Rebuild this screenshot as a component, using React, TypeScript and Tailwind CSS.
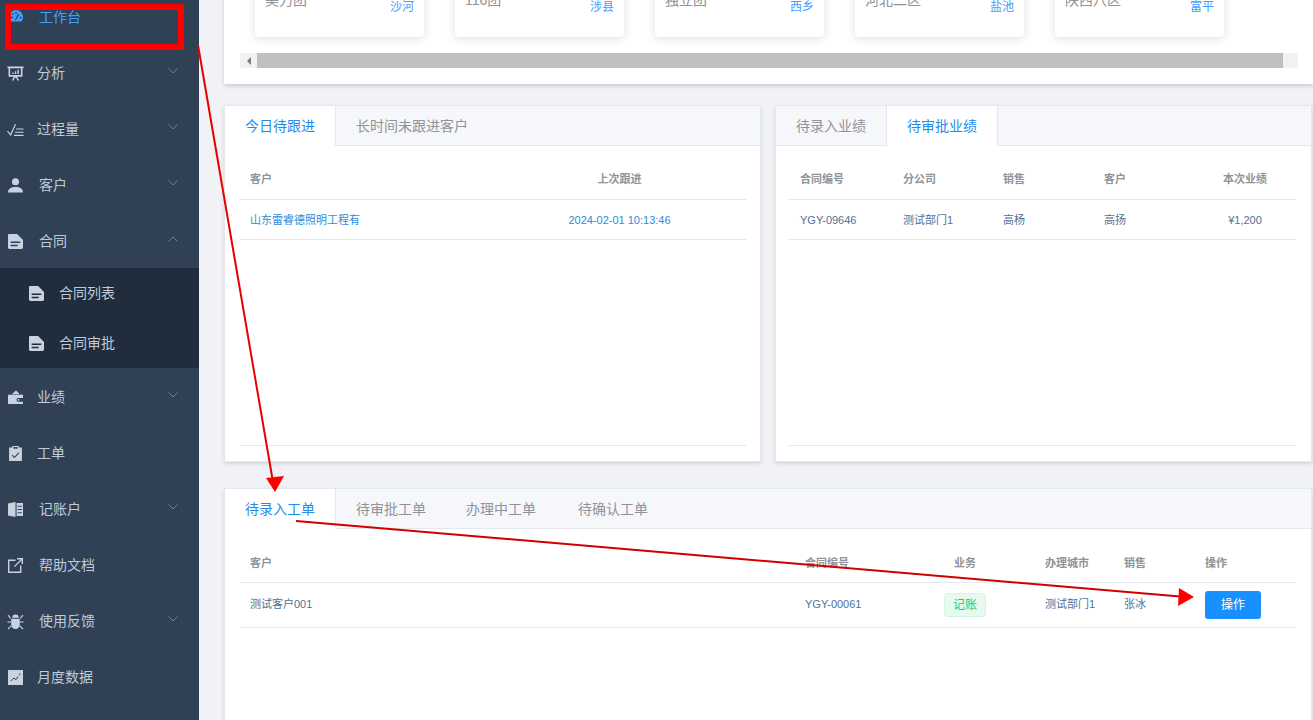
import type { ReactNode } from "react";

const FONT = "font-['Liberation_Sans','Noto_Sans_CJK_SC',sans-serif]";

const Svg = ({ children, className = "" }: { children: ReactNode; className?: string }) => (
  <svg viewBox="1 1 14 14" className={`w-[15px] h-[15px] shrink-0 overflow-visible text-[#c8d3df] ${className}`} fill="currentColor">
    {children}
  </svg>
);

const DashIcon = () => (
  <svg viewBox="1 1 14 14" className="w-[14px] h-[14px] shrink-0 ml-[1px] -mt-[2px] text-[#409eff]" fill="currentColor">
    <path d="M8 2a7 7 0 0 1 7 7c0 1.800-.6 3.300-1.600 4.500H2.600A6.900 6.900 0 0 1 1 9a7 7 0 0 1 7-7z" />
    <path d="M4 5.500l1.500 1M8 4v2M7.500 12l3-6M3 9.500h2M11.500 9.500h2" stroke="#304156" strokeWidth="1.300" fill="none" />
  </svg>
);

const BoardIcon = () => (
  <Svg>
    <path d="M0.500 1.500h15v1.500h-1v8h-5l2 3.500h-1.500L8.500 12h-1l-1.500 2.500H4.500l2-3.500h-5V3h-1zM3 3v6.500h10V3z" />
    <path d="M5 7h1.300v1.500H5zM7.400 5.800h1.300v2.700H7.400zM9.800 4.500h1.300v4H9.800z" />
  </Svg>
);

const CheckListIcon = () => (
  <Svg>
    <path d="M0.500 9.500l3 3.500L8 3" fill="none" stroke="currentColor" strokeWidth="1.100" />
    <path d="M8.500 7h7v1.100h-7zM7.500 10h8v1.100h-8zM6.500 13h9v1.100h-9z" />
  </Svg>
);

const UserIcon = () => (
  <Svg>
    <circle cx="8" cy="4.500" r="3.300" />
    <path d="M1 14.500c0-3.500 2.500-5.200 7-5.200s7 1.700 7 5.200z" />
  </Svg>
);

const DocIcon = () => (
  <Svg>
    <path d="M2 1h7.500L15 6.500v7.200a1.300 1.300 0 0 1-1.300 1.300H2.300A1.300 1.300 0 0 1 1 13.700V2a1 1 0 0 1 1-1z" />
    <path d="M3.500 8h9v1.400h-9zM3.500 11h6.500v1.400H3.500z" fill="#304156" />
  </Svg>
);

const SubDocIcon = () => (
  <Svg>
    <path d="M2 1h7.500L15 6.500v7.200a1.300 1.300 0 0 1-1.300 1.300H2.300A1.300 1.300 0 0 1 1 13.700V2a1 1 0 0 1 1-1z" />
    <path d="M3.500 8h9v1.400h-9zM3.500 11h6.500v1.400H3.500z" fill="#1f2d3d" />
  </Svg>
);

const WalletIcon = () => (
  <Svg>
    <path d="M8.500 1.500L12 5H4.500z" />
    <path d="M1 5.500h14v3H10a2 2 0 0 0 0 3.500h5v2H1z" />
    <circle cx="10.800" cy="10.200" r="0.900" />
  </Svg>
);

const ClipboardIcon = () => (
  <Svg>
    <path d="M5 1h6v1.500h3V15H2V2.500h3z" />
    <path d="M4.800 9.500l2.200 2.300 4.200-4.600" fill="none" stroke="#304156" strokeWidth="1" />
    <path d="M6 2h4v1.500H6z" fill="#304156" />
  </Svg>
);

const BookIcon = () => (
  <Svg>
    <path d="M1 2.500L8 1v14l-7-1.500z" />
    <path d="M9 2h6v12H9zM10 4.500v1h4v-1zM10 7.500v1h4v-1zM10 10.500v1h4v-1z" fillRule="evenodd" />
  </Svg>
);

const ExternalIcon = () => (
  <Svg>
    <path d="M1 2.500h7v1.300H2.300v9.900h9.900V8h1.300v7H1z" />
    <path d="M6.500 8.600L12.800 2.300H9.500V1H15v5.500h-1.300V3.200L7.400 9.500z" />
  </Svg>
);

const BugIcon = () => (
  <Svg>
    <path d="M5 4.500a3 3 0 0 1 6 0z" />
    <path d="M4 5.500h8v5.500a4 4 0 0 1-8 0z" />
    <path d="M1 2l2.500 3M15 2l-2.500 3M0.500 8.500H4M15.500 8.500H12M1 15l3-3M15 15l-3-3" stroke="currentColor" strokeWidth="1" fill="none" />
  </Svg>
);

const ChartIcon = () => (
  <Svg>
    <path d="M1 1h14v14H1z" />
    <path d="M3.500 11.500l3-3 2 1.500 2-3" fill="none" stroke="#304156" strokeWidth="0.900" />
    <circle cx="12" cy="5" r="0.700" fill="#304156" />
  </Svg>
);

const Chevron = ({ up = false }: { up?: boolean }) => (
  <svg viewBox="0 0 10 6" className="absolute right-[21px] top-[23px] w-[10px] h-[6px] text-[#6f7f92]" fill="none" stroke="currentColor">
    <path d={up ? "M0.500 5.500L5 1l4.500 4.500" : "M0.500 0.500L5 5l4.500-4.500"} />
  </svg>
);

const menuTop: { icon: ReactNode; label: string; left: string; arrow?: boolean; up?: boolean; active?: boolean }[] = [
  { icon: <DashIcon />, label: "工作台", left: "ml-[16px]", active: true },
  { icon: <BoardIcon />, label: "分析", left: "ml-[14px]", arrow: true },
  { icon: <CheckListIcon />, label: "过程量", left: "ml-[14px]", arrow: true },
  { icon: <UserIcon />, label: "客户", left: "ml-[16px]", arrow: true },
  { icon: <DocIcon />, label: "合同", left: "ml-[16px]", arrow: true, up: true },
];

const menuBottom: { icon: ReactNode; label: string; left: string; arrow?: boolean }[] = [
  { icon: <WalletIcon />, label: "业绩", left: "ml-[14px]", arrow: true },
  { icon: <ClipboardIcon />, label: "工单", left: "ml-[14px]" },
  { icon: <BookIcon />, label: "记账户", left: "ml-[16px]", arrow: true },
  { icon: <ExternalIcon />, label: "帮助文档", left: "ml-[16px]" },
  { icon: <BugIcon />, label: "使用反馈", left: "ml-[16px]", arrow: true },
  { icon: <ChartIcon />, label: "月度数据", left: "ml-[14px]" },
];

function MenuRow({ icon, label, left, arrow, up, active }: { icon: ReactNode; label: string; left: string; arrow?: boolean; up?: boolean; active?: boolean }) {
  return (
    <div className={`relative h-[56px] flex items-center pl-[8px] text-[14px] ${active ? "text-[#409eff]" : "text-[#bfcbd9]"}`}>
      {icon}
      <span className={left}>{label}</span>
      {arrow && <Chevron up={up} />}
    </div>
  );
}

function Sidebar() {
  return (
    <aside className="w-[199px] shrink-0 bg-[#304156] -mt-[11px] h-[760px]">
      {menuTop.map((m) => (
        <MenuRow key={m.label} {...m} />
      ))}
      <div className="relative -mt-[1px] mb-[1px] bg-[#1f2d3d] h-[100px] text-[14px] text-[#bfcbd9]">
        {["合同列表", "合同审批"].map((t) => (
          <div key={t} className="h-[50px] flex items-center pl-[29px]">
            <SubDocIcon />
            <span className="ml-[15px]">{t}</span>
          </div>
        ))}
      </div>
      {menuBottom.map((m) => (
        <MenuRow key={m.label} {...m} />
      ))}
    </aside>
  );
}

const cards = [
  { title: "美力团", place: "沙河" },
  { title: "116团", place: "涉县" },
  { title: "独立团", place: "西乡" },
  { title: "河北二区", place: "盐池" },
  { title: "陕西八区", place: "富平" },
];

function TopPanel() {
  return (
    <section className="bg-white pt-[10px] pb-[16px] shadow-[0_2px_4px_rgba(0,0,0,0.16)] mr-[-1px]">
      <div className="flex gap-[31px] pl-[31px]">
        {cards.map((c) => (
          <div key={c.title} className="w-[169px] h-[67px] rounded-[4px] bg-white shadow-[0_2px_10px_rgba(0,0,0,0.12)] pt-[23px] px-[10px] flex justify-between">
            <span className="text-[14px] leading-[14px] text-[#909399]">{c.title}</span>
            <span className="text-[12px] leading-[12px] mt-[8px] text-[#409eff]">{c.place}</span>
          </div>
        ))}
      </div>
      <div className="flex h-[15px] mt-[16px] ml-[16px] mr-[15px] bg-[#f1f1f1]">
        <div className="w-[17px] flex items-center justify-center">
          <div className="w-0 h-0 border-y-[4px] border-y-transparent border-r-[4px] border-r-[#7a7a7a]" />
        </div>
        <div className="w-[1026px] bg-[#bfbfbf]" />
      </div>
    </section>
  );
}

function Tabs({ items, active, className = "" }: { items: string[]; active: number; className?: string }) {
  return (
    <div className={`flex h-[40px] bg-[#f5f7fa] border-b border-[#e4e7ed] text-[14px] ${className}`}>
      {items.map((t, i) => (
        <div
          key={t}
          className={`px-[20px] leading-[40px] ${
            i === active
              ? `bg-white h-[40px] text-[#1f8ceb] border-r border-[#e4e7ed] ${i > 0 ? "border-l" : ""}`
              : "h-[39px] text-[#909399]"
          }`}
        >
          {t}
        </div>
      ))}
    </div>
  );
}

const Panel = ({ children, className = "" }: { children: ReactNode; className?: string }) => (
  <section className={`bg-white border border-[#e4e7ed] shadow-[0_2px_4px_rgba(0,0,0,0.12)] ${className}`}>{children}</section>
);

function LeftTable() {
  return (
    <div className="ml-[15px] mr-[14px] h-[301px] border-b border-[#e4e7ed]">
      <table className="w-full table-fixed text-[11px]">
        <thead>
          <tr className="h-[54px] border-b border-[#e4e7ed] text-[#909399]">
            <th className="text-left font-bold pl-[10px] pt-[15px]">客户</th>
            <th className="font-bold pt-[15px]">上次跟进</th>
          </tr>
        </thead>
        <tbody>
          <tr className="h-[40px] border-b border-[#e4e7ed] text-[#2d8cdc]">
            <td className="pl-[10px] pt-[2px]">山东雷睿德照明工程有</td>
            <td className="text-center pt-[2px]">2024-02-01 10:13:46</td>
          </tr>
        </tbody>
      </table>
    </div>
  );
}

function RightTable() {
  return (
    <div className="ml-[13px] mr-[15px] h-[301px] border-b border-[#e4e7ed]">
      <table className="w-full table-fixed text-[11px]">
        <colgroup>
          <col className="w-[103px]" />
          <col className="w-[100px]" />
          <col className="w-[101px]" />
          <col className="w-[101px]" />
          <col />
        </colgroup>
        <thead>
          <tr className="h-[54px] border-b border-[#e4e7ed] text-[#909399]">
            <th className="text-left font-bold pl-[11px] pt-[15px]">合同编号</th>
            <th className="text-left font-bold pl-[11px] pt-[15px]">分公司</th>
            <th className="text-left font-bold pl-[11px] pt-[15px]">销售</th>
            <th className="text-left font-bold pl-[11px] pt-[15px]">客户</th>
            <th className="font-bold pt-[15px]">本次业绩</th>
          </tr>
        </thead>
        <tbody>
          <tr className="h-[40px] border-b border-[#e4e7ed] text-[#4f7296]">
            <td className="pl-[11px] pt-[2px]">YGY-09646</td>
            <td className="pl-[11px] pt-[2px]">测试部门1</td>
            <td className="pl-[11px] pt-[2px]">高杨</td>
            <td className="pl-[11px] pt-[2px]">高扬</td>
            <td className="text-center pt-[2px]">¥1,200</td>
          </tr>
        </tbody>
      </table>
    </div>
  );
}

function OrderTable() {
  return (
    <div className="mx-[15px] h-[230px]">
      <table className="w-full table-fixed text-[11px]">
        <colgroup>
          <col className="w-[555px]" />
          <col className="w-[100px]" />
          <col className="w-[140px]" />
          <col className="w-[79px]" />
          <col className="w-[81px]" />
          <col />
        </colgroup>
        <thead>
          <tr className="h-[54px] border-b border-[#e4e7ed] text-[#909399]">
            <th className="text-left font-bold pl-[10px] pt-[17px]">客户</th>
            <th className="text-left font-bold pl-[10px] pt-[17px]">合同编号</th>
            <th className="font-bold pt-[17px]">业务</th>
            <th className="text-left font-bold pl-[10px] pt-[17px]">办理城市</th>
            <th className="text-left font-bold pl-[10px] pt-[17px]">销售</th>
            <th className="text-left font-bold pl-[10px] pt-[17px]">操作</th>
          </tr>
        </thead>
        <tbody>
          <tr className="h-[45px] border-b border-[#e4e7ed] text-[#4f7296]">
            <td className="pl-[10px]">测试客户001</td>
            <td className="pl-[10px]">YGY-00061</td>
            <td>
              <span className="mx-auto flex w-[42px] h-[24px] items-center justify-center rounded-[4px] border border-[#d0f5e0] bg-[#e7faf0] text-[12px] text-[#13ce66]">
                记账
              </span>
            </td>
            <td className="pl-[10px]">测试部门1</td>
            <td className="pl-[10px]">张冰</td>
            <td className="pl-[10px]">
              <button className="w-[56px] h-[28px] rounded-[3px] bg-[#1890ff] text-white text-[12px]">操作</button>
            </td>
          </tr>
        </tbody>
      </table>
    </div>
  );
}

function Annotations() {
  return (
    <svg className="absolute inset-0 w-[1313px] h-[720px] pointer-events-none" viewBox="0 0 1313 720" fill="none">
      <rect x="8" y="7" width="173" height="40" stroke="#ff0000" strokeWidth="6" />
      <path d="M198 45L273 482" stroke="#e60000" strokeWidth="2" />
      <path d="M266 478L284 476L275 492z" fill="#ff0000" />
      <path d="M296 521L1180 596.500" stroke="#d00000" strokeWidth="2" />
      <path d="M1179 588L1194 597L1178 606z" fill="#ff0000" />
    </svg>
  );
}

export default function App() {
  return (
    <div className={`relative w-[1313px] h-[720px] overflow-hidden flex bg-[#f0f2f5] ${FONT}`}>
      <Sidebar />
      <main className="flex-1 min-w-0 -mt-[40px] pl-[25px] pr-[1px]">
        <TopPanel />
        <div className="flex gap-[14px] mt-[21px]">
          <Panel className="w-[537px] h-[357px]">
            <Tabs items={["今日待跟进", "长时间未跟进客户"]} active={0} className="mb-[-1px]" />
            <LeftTable />
          </Panel>
          <Panel className="w-[537px] h-[357px]">
            <Tabs items={["待录入业绩", "待审批业绩"]} active={1} className="mb-[-1px]" />
            <RightTable />
          </Panel>
        </div>
        <Panel className="mt-[26px] h-[300px]">
          <Tabs
            items={["待录入工单", "待审批工单", "办理中工单", "待确认工单"]}
            active={0}
            className="mb-[-1px] [&>*:nth-child(3)]:pr-[22px]"
          />
          <OrderTable />
        </Panel>
      </main>
      <Annotations />
    </div>
  );
}
